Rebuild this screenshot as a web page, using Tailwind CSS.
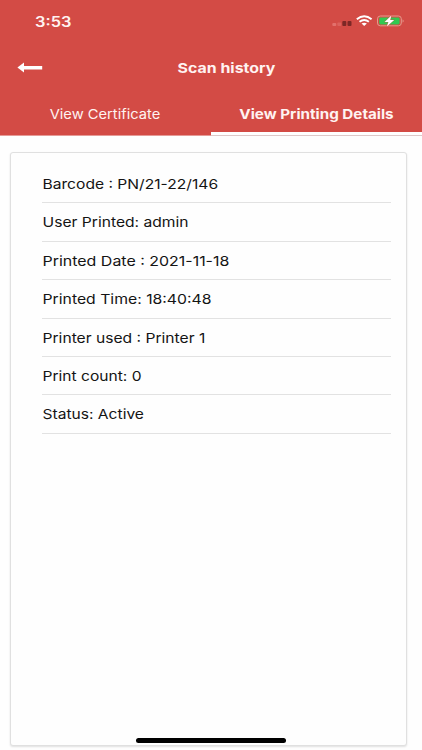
<!DOCTYPE html>
<html lang="en">
<head>
<meta charset="utf-8">
<meta name="viewport" content="width=device-width, initial-scale=1">
<title>Scan history</title>
<script src="https://cdn.jsdelivr.net/npm/@tailwindcss/browser@4"></script>
</head>
<body class="bg-white font-['Inter','Liberation_Sans',sans-serif]">
<div class="flex h-[750px] w-[422px] flex-col overflow-hidden bg-[#fefefe]">
  <header class="flex h-[136px] shrink-0 flex-col bg-[#d34b45] text-[#fff3f1]">
    <div class="flex h-[42px] items-center justify-between pr-[18px] pl-[35px]">
      <span class="inline-block origin-left scale-x-[1.17] text-[14px] leading-[43px] font-semibold">3:53</span>
      <svg class="h-[14px] w-[72px]" viewBox="0 0 72 14" fill="none">
        <g transform="translate(-.7 0)">
          <rect x="1" y="9" width="4" height="3" rx="1" fill="#e2716c"/>
          <rect x="6" y="8.5" width="4" height="3.5" rx="1" fill="#dc625d"/>
          <rect x="11" y="7" width="4" height="5" rx="1" fill="#7c2826"/>
          <rect x="16.2" y="7" width="4" height="5" rx="1" fill="#7c2826"/>
        </g>
        <g transform="translate(-.8 0)">
          <path d="M25.6 5.2Q33 -.9 40.4 5.2" stroke="#fff" stroke-width="1.9"/>
          <path d="M28.3 7.8Q33 4.1 37.7 7.8" stroke="#fff" stroke-width="1.8"/>
          <path d="M30.3 9.6Q33 7.8 35.7 9.6L33 12Z" fill="#fff"/>
        </g>
        <rect x="45.5" y="2" width="23.8" height="9.8" rx="2.8" stroke="#e59a8c" stroke-width="1"/>
        <rect x="47.2" y="3.4" width="20.4" height="7" rx="1.4" fill="#30c951"/>
        <path d="M70.6 5.4v3q1-.4 1-1.5t-1-1.5Z" fill="#e59a8c"/>
        <path d="M59.4 1.4L52.6 7.9h3.8L54.8 12.4L62.2 5.9h-4Z" fill="#fff" stroke="#d34b45" stroke-width=".7" paint-order="stroke"/>
      </svg>
    </div>
    <div class="grid h-[51px] grid-cols-[60px_1fr_29px] items-center">
      <svg class="ml-[17px] h-[12px] w-[26px]" viewBox="0 0 26 12"><path d="M.4 5.6L7 .6V4H25.2V7.4H7V10.6Z" fill="#fff"/></svg>
      <h1 class="text-center leading-5"><span class="inline-block scale-x-[1.18] text-[13.5px] font-bold">Scan history</span></h1>
    </div>
    <nav class="grid h-[43px] grid-cols-2">
      <div class="flex items-center justify-center border-b border-[#e59a96] pt-[2px] pr-[2px]"><span class="inline-block scale-x-[1.13] text-[13px] whitespace-nowrap">View Certificate</span></div>
      <div class="flex flex-col text-center">
        <span class="inline-block h-[39px] scale-x-[1.17] text-[13px] leading-[43px] font-bold whitespace-nowrap">View Printing Details</span>
        <div class="h-[4px] shrink-0 border-b border-[#ddc9c9] bg-white"></div>
      </div>
    </nav>
  </header>
  <main class="mt-4 mr-[15px] ml-[10px] h-[594px] rounded-[3px] border border-[#e0e0e0] bg-[#fefefe] pt-[12px] pr-[15px] pl-[31px] shadow-[0_1px_2px_rgba(0,0,0,0.12)]">
    <ul class="text-[13.5px] text-[#141414]">
      <li class="h-[38.4px] border-b border-[#e2e2e2] leading-[38px]"><span class="inline-block origin-left translate-x-[.5px] scale-x-[1.157]">Barcode : PN/21-22/146</span></li>
      <li class="h-[38.4px] border-b border-[#e2e2e2] leading-[38px]"><span class="inline-block origin-left translate-x-[.5px] scale-x-[1.158]">User Printed: admin</span></li>
      <li class="h-[38.4px] border-b border-[#e2e2e2] leading-[38px]"><span class="inline-block origin-left translate-x-[.5px] scale-x-[1.182]">Printed Date : 2021-11-18</span></li>
      <li class="h-[38.4px] border-b border-[#e2e2e2] leading-[38px]"><span class="inline-block origin-left translate-x-[.5px] scale-x-[1.168]">Printed Time: 18:40:48</span></li>
      <li class="h-[38.4px] border-b border-[#e2e2e2] leading-[38px]"><span class="inline-block origin-left translate-x-[.5px] scale-x-[1.158]">Printer used : Printer 1</span></li>
      <li class="h-[38.4px] border-b border-[#e2e2e2] leading-[38px]"><span class="inline-block origin-left translate-x-[.5px] scale-x-[1.155]">Print count: 0</span></li>
      <li class="h-[38.4px] border-b border-[#e2e2e2] leading-[39px]"><span class="inline-block origin-left translate-x-[.5px] scale-x-[1.155]">Status: Active</span></li>
    </ul>
  </main>
  <div class="absolute top-[738px] left-[136px] h-[5px] w-[150px] rounded-full bg-black"></div>
</div>
</body>
</html>
